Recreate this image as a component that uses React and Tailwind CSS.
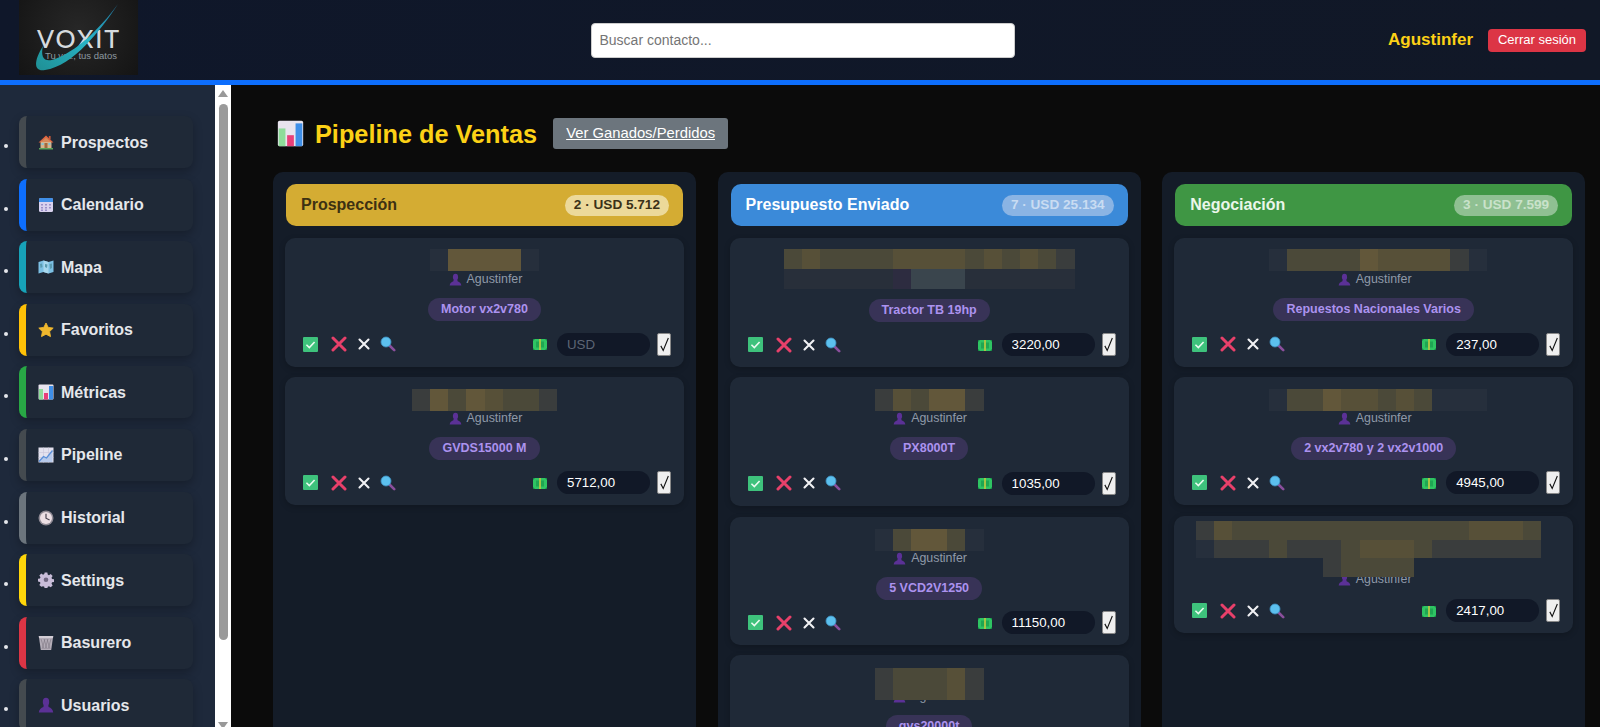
function House() {
  return (
    <svg viewBox="0 0 16 16" className="w-[16px] h-[16px] shrink-0">
      <rect x="2.5" y="7" width="11" height="7.5" fill="#d9b48a" />
      <path d="M8 1.5 L15.5 8.5 L13.5 8.5 L8 4 L2.5 8.5 L0.5 8.5 Z" fill="#e0633f" />
      <path d="M8 3.5 L2.5 8 L13.5 8 Z" fill="#d98a5a" />
      <rect x="10.8" y="2" width="1.8" height="3.5" fill="#c85a3a" />
      <rect x="6.5" y="9" width="3" height="5.5" fill="#a0693f" />
      <rect x="3.6" y="9" width="2" height="2" fill="#7fc4d8" />
      <rect x="10.4" y="9" width="2" height="2" fill="#7fc4d8" />
      <rect x="1" y="14" width="14" height="1.5" fill="#5aa35a" />
    </svg>
  )
}

function CalendarIcon() {
  return (
    <svg viewBox="0 0 16 16" className="w-[16px] h-[16px] shrink-0">
      <rect x="1" y="1" width="14" height="14" rx="1.5" fill="#d9d2ee" />
      <path d="M1 5 V2.5 A1.5 1.5 0 0 1 2.5 1 H13.5 A1.5 1.5 0 0 1 15 2.5 V5 Z" fill="#3f8fe8" />
      <path d="M3 7h2v1.5H3zM7 7h2v1.5H7zM11 7h2v1.5h-2zM3 10h2v1.5H3zM7 10h2v1.5H7zM11 10h2v1.5h-2zM3 12.6h2v1.4H3zM7 12.6h2v1.4H7z" fill="#9a90c8" />
    </svg>
  )
}

function MapIcon() {
  return (
    <svg viewBox="0 0 16 16" className="w-[16px] h-[16px] shrink-0">
      <path d="M0.5 3 L5.5 1.5 L10.5 3 L15.5 1.5 V13 L10.5 14.5 L5.5 13 L0.5 14.5 Z" fill="#7cc0e4" />
      <path d="M5.5 1.5 L10.5 3 V14.5 L5.5 13 Z" fill="#a8d8ee" />
      <path d="M2 5 L4 4.5 L4.5 8 L2.5 9 Z M7 5 L9.5 5.5 L9 9 L7 8 Z M11.5 5 L14 4.5 L14 9 L12 10 Z" fill="#5a9bb0" />
    </svg>
  )
}

function StarIcon() {
  return (
    <svg viewBox="0 0 16 16" className="w-[16px] h-[16px] shrink-0">
      <path d="M8 1 L10.2 5.4 L15.2 6.1 L11.6 9.6 L12.5 14.6 L8 12.2 L3.5 14.6 L4.4 9.6 L0.8 6.1 L5.8 5.4 Z" fill="#f0b82e" stroke="#f0b82e" strokeWidth="0.9" strokeLinejoin="round" />
    </svg>
  )
}

function BarsIcon({ size = 'w-[16px] h-[16px]' }) {
  return (
    <svg viewBox="0 0 16 16" className={`${size} shrink-0`}>
      <rect x="0.5" y="0.5" width="15" height="15" rx="1" fill="#e8e4ee" />
      <rect x="1" y="5" width="4" height="10.5" fill="#8fdc9a" />
      <rect x="6" y="9" width="4" height="6.5" fill="#e8407a" />
      <rect x="11" y="2" width="4" height="13.5" fill="#3f8fe8" />
    </svg>
  )
}

function LineIcon() {
  return (
    <svg viewBox="0 0 16 16" className="w-[16px] h-[16px] shrink-0">
      <rect x="0.5" y="0.5" width="15" height="15" fill="#e4e2ee" />
      <path d="M0.5 5.5H15.5M0.5 10.5H15.5M5.5 0.5V15.5M10.5 0.5V15.5" stroke="#c9c5da" strokeWidth="0.6" />
      <path d="M1 14.5 L5.5 9.5 L8.5 11 L14.5 3.5 V15 H1 Z" fill="#b7c9ea" />
      <path d="M1 14.5 L5.5 9.5 L8.5 11 L14.5 3.5" fill="none" stroke="#5a8fd8" strokeWidth="1.3" />
    </svg>
  )
}

function ClockIcon() {
  return (
    <svg viewBox="0 0 16 16" className="w-[16px] h-[16px] shrink-0">
      <circle cx="8" cy="8" r="7.5" fill="#8f8a94" />
      <circle cx="8" cy="8" r="6" fill="#ecdfe4" />
      <path d="M8 3.8 V8.2 L11.6 10" fill="none" stroke="#4a4450" strokeWidth="1.2" />
    </svg>
  )
}

function GearIcon() {
  return (
    <svg viewBox="0 0 16 16" className="w-[16px] h-[16px] shrink-0">
      <path d="M6.6 0.5h2.8l.4 2.2 1.3.6 1.9-1.2 2 2-1.2 1.9.6 1.3 2.2.4v2.8l-2.2.4-.6 1.3 1.2 1.9-2 2-1.9-1.2-1.3.6-.4 2.2H6.6l-.4-2.2-1.3-.6L3 15.6l-2-2 1.2-1.9-.6-1.3-2.2-.4V7.2l2.2-.4.6-1.3L1 3.6l2-2 1.9 1.2 1.3-.6z" transform="translate(0.4 0) scale(0.95)" fill="#c9bdd9" />
      <circle cx="8" cy="7.8" r="2.3" fill="#6f6680" />
    </svg>
  )
}

function TrashIcon() {
  return (
    <svg viewBox="0 0 16 16" className="w-[16px] h-[16px] shrink-0">
      <path d="M0.8 1 H15.2 L13.2 15 H2.8 Z" fill="#b4adb8" />
      <path d="M0.8 1 H15.2 L15 3 H1 Z" fill="#d3ced6" />
      <path d="M3 4 L6 14 M6 4 L9 14 M9 4 L12 14 M13 4 L10 14 M10 4 L7 14 M7 4 L4 14" stroke="#7c7582" strokeWidth="0.6" />
    </svg>
  )
}

function BustIcon({ size = 'w-[16px] h-[16px]' }) {
  return (
    <svg viewBox="0 0 16 16" className={`${size} shrink-0`}>
      <ellipse cx="8" cy="5" rx="3.2" ry="4.2" fill="#5b3196" />
      <path d="M5.8 8 H10.2 L10.6 10 C13 10.8 15 12.5 15.2 15.5 H0.8 C1 12.5 3 10.8 5.4 10 Z" fill="#5b3196" />
    </svg>
  )
}

function CheckBoxIcon() {
  return (
    <svg viewBox="0 0 14 14" className="w-[15px] h-[15px] shrink-0">
      <rect width="14" height="14" rx="1" fill="#3ec27c" />
      <path d="M3.2 7.2 L5.9 9.8 L10.8 4.6" fill="none" stroke="#eafbf0" strokeWidth="1.5" />
    </svg>
  )
}

function CrossIcon() {
  return (
    <svg viewBox="0 0 16 16" className="w-[16px] h-[16px] shrink-0">
      <path d="M2 2 L14 14 M14 2 L2 14" stroke="#e8406a" strokeWidth="3" strokeLinecap="round" />
    </svg>
  )
}

function TimesIcon() {
  return (
    <svg viewBox="0 0 12 12" className="w-[12px] h-[12px] shrink-0">
      <path d="M1.5 1.5 L10.5 10.5 M10.5 1.5 L1.5 10.5" stroke="#f1f1f4" strokeWidth="2.1" strokeLinecap="round" />
    </svg>
  )
}

function LensIcon() {
  return (
    <svg viewBox="0 0 16 16" className="w-[16px] h-[16px] shrink-0">
      <path d="M9.5 9.5 L14.2 14.2" stroke="#8a4f9c" strokeWidth="2.6" strokeLinecap="round" />
      <circle cx="6" cy="6" r="5" fill="#5cc0ee" stroke="#3f8fc0" strokeWidth="0.8" />
    </svg>
  )
}

function MoneyIcon() {
  return (
    <svg viewBox="0 0 14 11" className="w-[14px] h-[11px] shrink-0">
      <rect width="14" height="11" fill="#2fc463" />
      <path d="M0 0H2L0 2ZM14 0H12L14 2ZM0 11H2L0 9ZM14 11H12L14 9Z" fill="#168a45" />
      <rect x="3" y="2.5" width="3" height="6" fill="#1fa653" />
      <rect x="8" y="2.5" width="3" height="6" fill="#1fa653" />
      <rect x="6.3" y="0" width="1.4" height="11" fill="#d8c83a" />
    </svg>
  )
}

function TickIcon() {
  return (
    <svg viewBox="0 0 12 18" className="h-[17px] w-[11px] shrink-0">
      <path d="M2 10.5 L4.6 15.5 L10.2 2" fill="none" stroke="#111" strokeWidth="1.2" />
    </svg>
  )
}

const navItems = [
  { label: 'Prospectos', icon: <House />, border: 'border-[#444a4f]' },
  { label: 'Calendario', icon: <CalendarIcon />, border: 'border-[#0d6efd]' },
  { label: 'Mapa', icon: <MapIcon />, border: 'border-[#17a2b8]' },
  { label: 'Favoritos', icon: <StarIcon />, border: 'border-[#ffc107]' },
  { label: 'Métricas', icon: <BarsIcon />, border: 'border-[#28a745]' },
  { label: 'Pipeline', icon: <LineIcon />, border: 'border-[#444a4f]' },
  { label: 'Historial', icon: <ClockIcon />, border: 'border-[#6c757d]' },
  { label: 'Settings', icon: <GearIcon />, border: 'border-[#ffd60a]' },
  { label: 'Basurero', icon: <TrashIcon />, border: 'border-[#dc3545]' },
  { label: 'Usuarios', icon: <BustIcon />, border: 'border-[#444a4f]' },
]

// mosaic tones used for the blurred contact names
const a = 'bg-[#262f3c]'
const b = 'bg-[#3a3d3d]'
const c = 'bg-[#4b4939]'
const d = 'bg-[#575038]'
const e = 'bg-[#62573a]'
const f = 'bg-[#3a454d]'
const g = 'bg-[#2d2c40]'
const h = 'bg-[#282f3a]'

const below = 'mt-[12px] mb-[-1.5px]'

const columns = [
  {
    title: 'Prospección',
    badge: '2 · USD 5.712',
    head: 'bg-[#d4ac33] text-[#3d3112]',
    pill: 'bg-[#ecd99a] text-[#3a3118]',
    cards: [
      { rows: [{ cells: [a, e, e, e, e, a], h: 'h-[22px]' }], item: 'Motor vx2v780', value: '' },
      { rows: [{ cells: [b, e, c, e, d, c, c, b], h: 'h-[22px]' }], name: below, item: 'GVDS15000 M', value: '5712,00' },
    ],
  },
  {
    title: 'Presupuesto Enviado',
    badge: '7 · USD 25.134',
    head: 'bg-[#3b8ad9] text-white',
    pill: 'bg-[#8ab4e4] text-[#c9dcf2]',
    cards: [
      {
        rows: [
          { cells: [c, d, c, c, c, c, d, d, d, d, c, d, c, d, c, b], h: 'h-[20px]' },
          { cells: [h, h, h, h, h, h, g, f, f, f, h, h, h, h, h, h], h: 'h-[20px]' },
        ],
        name: 'mt-[10.5px] mb-[-17.5px]',
        item: 'Tractor TB 19hp',
        value: '3220,00',
      },
      { rows: [{ cells: [b, d, c, e, e, b], h: 'h-[22px]' }], name: below, item: 'PX8000T', value: '1035,00' },
      { rows: [{ cells: [a, c, e, e, c, a], h: 'h-[22px]' }], name: below, item: '5 VCD2V1250', value: '11150,00', top: 'mt-[1px]' },
      {
        rows: [{ cells: [b, c, c, c, d, b], h: 'h-[32px]' }],
        name: 'mt-[13px] mb-[-12.5px]',
        item: 'gvs20000t',
        value: '1500,00',
      },
    ],
  },
  {
    title: 'Negociación',
    badge: '3 · USD 7.599',
    head: 'bg-[#3f9644] text-[#eaf6ea]',
    pill: 'bg-[#8fc092] text-[#c9e2ca]',
    cards: [
      {
        rows: [{ cells: [a, c, c, c, c, e, d, d, d, d, b, a], h: 'h-[22px]' }],
        shift: 'ml-[8px]',
        item: 'Repuestos Nacionales Varios',
        value: '237,00',
      },
      {
        rows: [{ cells: [a, c, c, e, d, d, c, d, c, a, a, a], h: 'h-[22px]' }],
        shift: 'ml-[8px]',
        name: below,
        item: '2 vx2v780 y 2 vx2v1000',
        value: '4945,00',
      },
      {
        rows: [
          { cells: [b, d, c, c, c, c, c, c, c, c, c, c, c, c, c, d, d, d, c], h: 'h-[19px]' },
          { cells: [a, b, b, b, c, b, b, b, c, d, d, d, c, b, b, b, b, b, b], h: 'h-[18px]' },
          { cells: [b, c, c, c, c], h: 'h-[19px]' },
        ],
        shift: 'mr-[10px]',
        name: 'mt-[5px] mb-[-6.5px]',
        value: '2417,00',
        top: 'mt-[1px]',
      },
    ],
  },
]

function Mosaic({ rows, shift = '', name = 'mt-[10.5px]' }) {
  return (
    <div className={`relative z-10 mr-[5px] ${name}`}>
      {rows.map((row, i) => (
        <div key={i} className={`flex justify-center ${shift}`}>
          {row.cells.map((tone, j) => (
            <div key={j} className={`w-[18.2px] ${row.h} ${tone}`} />
          ))}
        </div>
      ))}
    </div>
  )
}

function DealCard({ card }) {
  return (
    <article className={`-mx-px rounded-[10px] bg-[#1f2937] pb-[11px] pl-[18px] pr-[13px] shadow-[0_2px_6px_rgba(0,0,0,0.2)] ${card.top || ''}`}>
      <Mosaic rows={card.rows} shift={card.shift} name={card.name} />
      <div className="flex h-[17px] items-center justify-center gap-[5px] pr-[3px] pt-[1px] text-[12.4px] text-[#8f99a8]">
        <BustIcon size="w-[13px] h-[13px]" />
        <span>Agustinfer</span>
      </div>
      {card.item && (
        <div className="mt-[10.5px] flex justify-center pr-[5px]">
          <span className="flex h-[23px] items-center rounded-full bg-[#383357] px-[13px] text-[12.5px] font-bold text-[#ac92ef]">
            {card.item}
          </span>
        </div>
      )}
      <div className="mt-[11.5px] flex h-[23px] items-center">
        <CheckBoxIcon />
        <span className="ml-[13px] flex"><CrossIcon /></span>
        <span className="ml-[11px] flex"><TimesIcon /></span>
        <span className="ml-[10px] flex"><LensIcon /></span>
        <span className="ml-auto mt-[1px] flex"><MoneyIcon /></span>
        <input
          readOnly
          defaultValue={card.value}
          placeholder="USD"
          className="ml-[10px] h-[23px] w-[93px] rounded-full bg-[#111827] px-[10px] text-[13.3px] text-white outline-none placeholder:text-[#5d6675]"
        />
        <button type="button" className="ml-[7px] flex h-[23px] w-[14px] items-center justify-center rounded-[2px] border border-[#888] bg-[#efefef]">
          <TickIcon />
        </button>
      </div>
    </article>
  )
}

function Logo() {
  return (
    <div className="relative h-[75px] w-[119px] overflow-hidden bg-[radial-gradient(circle_at_50%_40%,#272727,#141414)]">
      <span className="absolute left-[18px] top-[27px] font-['Lato',sans-serif] text-[25px] font-medium leading-[22px] tracking-[2px] text-[#d5dade]">VOXIT</span>
      <span className="absolute left-[26px] top-[51px] text-[9.5px] leading-[9px] text-[#8d9aa0]">Tu voz, tus datos</span>
      <svg viewBox="0 0 119 75" className="absolute inset-0 h-full w-full">
        <defs>
          <linearGradient id="swoosh" x1="0" y1="1" x2="1" y2="0">
            <stop offset="0" stopColor="#1f8f94" />
            <stop offset="0.55" stopColor="#28b5c8" />
            <stop offset="1" stopColor="#1e6f9a" />
          </linearGradient>
        </defs>
        <path d="M99 4 C82 30 54 66 26 70 C15 72 14 62 24 46 C21 58 26 63 36 59 C56 52 80 30 99 4 Z" fill="url(#swoosh)" />
      </svg>
    </div>
  )
}

export default function App() {
  return (
    <div className="flex h-screen w-full flex-col overflow-hidden bg-[#0b0b0b] font-['Liberation_Sans',Arial,sans-serif]">
      <header className="grid h-[85px] shrink-0 grid-cols-[1fr_auto_1fr] items-center border-b-[5px] border-[#0d6efd] bg-gradient-to-r from-[#0f172a] to-[#111827] pl-[19px] pr-[14px]">
        <div className="self-start">
          <Logo />
        </div>
        <input
          placeholder="Buscar contacto..."
          className="h-[35px] w-[424px] rounded-[4px] border border-[#ccc] bg-white px-[8px] text-[14px] text-black outline-none placeholder:text-[#757575]"
        />
        <div className="flex items-center justify-end gap-[15px]">
          <span className="text-[17px] font-bold text-[#fcd116]">Agustinfer</span>
          <button type="button" className="h-[23px] w-[98px] rounded-[4px] bg-[#dc3545] text-[13px] text-white">
            Cerrar sesión
          </button>
        </div>
      </header>

      <div className="flex min-h-0 flex-1">
        <aside className="w-[215px] shrink-0 overflow-hidden bg-[#1e293b]">
          <ul className="list-disc pl-[19px] pt-[31px] text-[14px] text-[#e5e7eb]">
            {navItems.map((item) => (
              <li key={item.label} className="mb-[10.6px]">
                <a className={`flex h-[52px] w-[174px] items-center gap-[7px] rounded-[8px] border-l-[7px] bg-[#1f2937] pl-[12px] text-[16px] font-bold text-[#e5e7eb] shadow-[0_4px_10px_rgba(0,0,0,0.25)] ${item.border}`}>
                  {item.icon}
                  <span className="mt-[1px]">{item.label}</span>
                </a>
              </li>
            ))}
          </ul>
        </aside>

        <div className="flex w-[16px] shrink-0 flex-col items-center bg-white">
          <div className="mt-[5px] h-0 w-0 border-x-[5px] border-b-[7px] border-x-transparent border-b-[#999]" />
          <div className="mt-[7px] h-[536px] w-[9px] rounded-full bg-[#9a9a9a]" />
          <div className="mb-[-2px] mt-auto h-0 w-0 border-x-[5px] border-t-[7px] border-x-transparent border-t-[#999]" />
        </div>

        <main className="flex min-w-0 flex-1 flex-col overflow-hidden pl-[42px] pr-[14px] pt-[33px]">
          <div className="flex h-[31px] shrink-0 items-center">
            <span className="ml-[4px] flex"><BarsIcon size="w-[27px] h-[27px]" /></span>
            <h1 className="ml-[11px] mt-[2px] text-[25.3px] font-bold text-[#fcd116]">Pipeline de Ventas</h1>
            <a className="ml-[16px] flex h-[31px] items-center rounded-[3px] bg-[#6c757d] px-[13px] text-[14.8px] text-white underline">
              Ver Ganados/Perdidos
            </a>
          </div>

          <div className="mt-[23px] flex min-h-0 flex-1 gap-[21.6px]">
            {columns.map((col) => (
              <section key={col.title} className="flex w-[423px] shrink-0 flex-col gap-[10px] rounded-t-[10px] bg-[#141c28] px-[13px] pt-[12px]">
                <div className={`mb-[2px] flex h-[42px] shrink-0 items-center justify-between rounded-[10px] pl-[15px] pr-[14px] ${col.head}`}>
                  <span className="text-[16px] font-bold">{col.title}</span>
                  <span className={`flex h-[21px] items-center rounded-full px-[9px] text-[13.6px] font-bold ${col.pill}`}>
                    {col.badge}
                  </span>
                </div>
                {col.cards.map((card, i) => (
                  <DealCard key={i} card={card} />
                ))}
              </section>
            ))}
          </div>
        </main>
      </div>
    </div>
  )
}
